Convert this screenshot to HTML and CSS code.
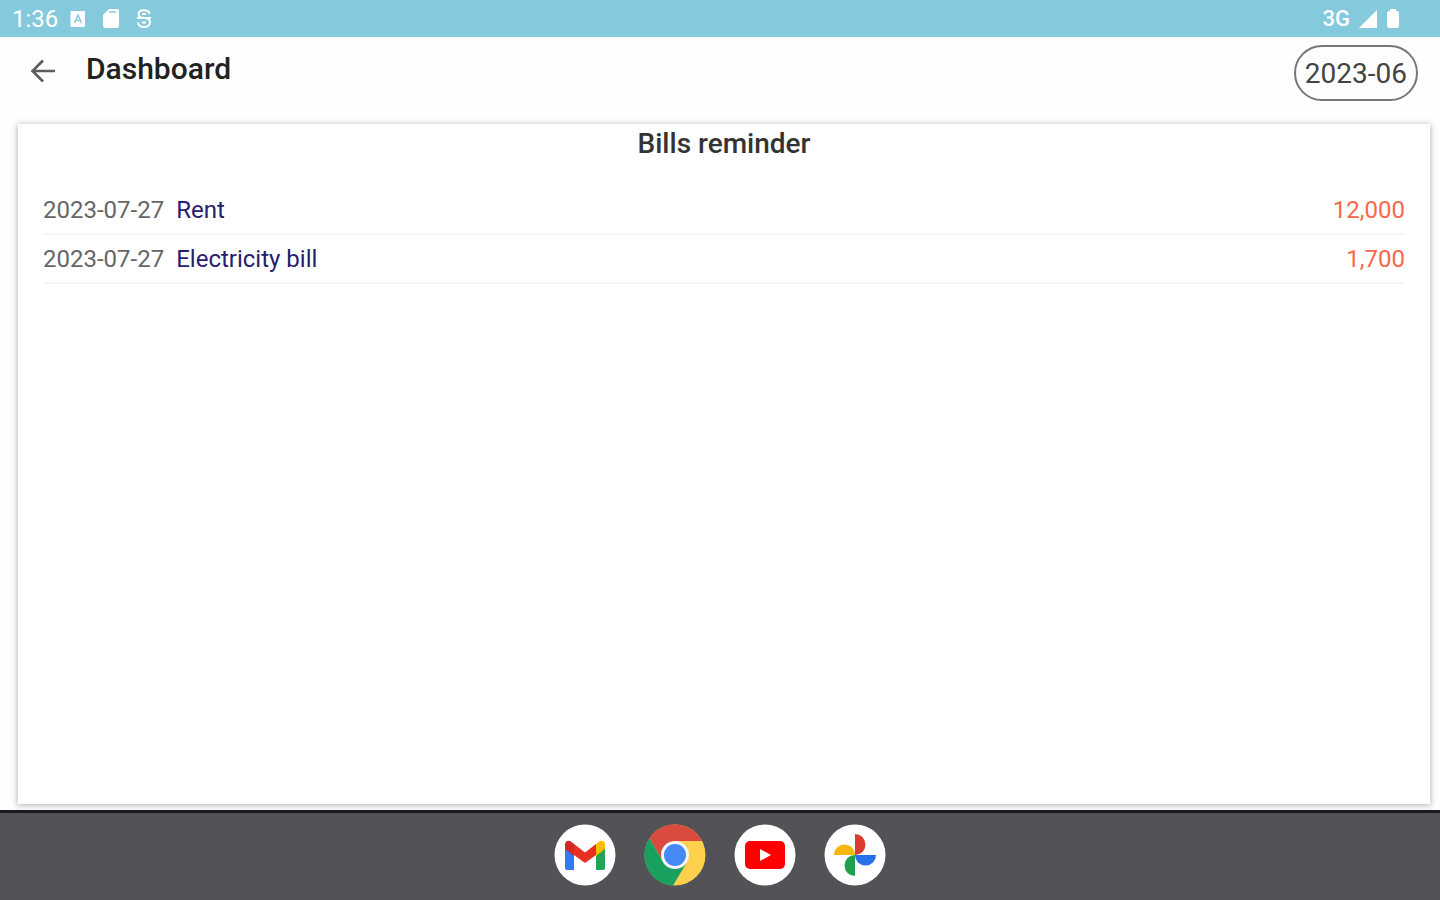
FILE: index.html
```html
<!DOCTYPE html>
<html lang="en">
<head>
  <meta charset="UTF-8">
  <meta name="viewport" content="width=device-width, initial-scale=1">
  <title>Dashboard</title>
  <link rel="stylesheet" href="styles.css">
</head>
<body>
  <div class="status-bar">
    <div class="status-left">
      <span class="clock">1:36</span>
      <svg class="status-icon" width="16" height="22" viewBox="0 0 16 22">
        <rect x="0.500" y="3" width="14.500" height="16" rx="1" fill="#fff"/>
        <path d="M4.500 15 L8 7 L11.500 15 M6 12.500 H10" fill="none" stroke="#84cadc" stroke-width="1.500"/>
      </svg>
      <svg class="status-icon" width="18" height="22" viewBox="0 0 18 22">
        <path d="M7 1 H15 a2 2 0 0 1 2 2 V18 a2 2 0 0 1 -2 2 H3 a2 2 0 0 1 -2 -2 V7 Z" fill="#fff"/>
        <path d="M7 4 H14" stroke="#84cadc" stroke-width="1.500"/>
      </svg>
      <svg class="status-icon" width="16" height="22" viewBox="0 0 16 22">
        <path d="M13.500 6 C13 1 2.500 1 2.500 6 C2.500 10 7 10 8 10 C13 10 14 12 14 14.500 C13.500 20.500 2.500 20.500 2 14.500 M1 10 H15 M6 6 H10 M6 14.500 H10" fill="none" stroke="#fff" stroke-width="2"/>
      </svg>
    </div>
    <div class="status-right">
      <span class="network">3G</span>
      <svg width="20" height="20" viewBox="0 0 20 20"><path d="M19 1 V19 H1 Z" fill="#fff"/></svg>
      <svg width="14" height="22" viewBox="0 0 14 22"><path d="M4 1 H10 V3 H11 a2 2 0 0 1 2 2 V18 a2 2 0 0 1 -2 2 H3 a2 2 0 0 1 -2 -2 V5 a2 2 0 0 1 2 -2 H4 Z" fill="#fff"/></svg>
    </div>
  </div>

  <header class="app-bar">
    <button class="back" type="button" aria-label="Back">
      <svg width="26" height="26" viewBox="0 0 26 26">
        <path d="M25 13 H3 M13 2.500 L2.500 13 L13 23.500" fill="none" stroke="#5c5c5c" stroke-width="2.600"/>
      </svg>
    </button>
    <h1>Dashboard</h1>
    <button class="month" type="button">2023-06</button>
  </header>

  <main class="card">
    <h2>Bills reminder</h2>
    <table class="bills">
      <tbody>
        <tr>
          <td class="date">2023-07-27</td>
          <td class="name">Rent</td>
          <td class="amount">12,000</td>
        </tr>
        <tr>
          <td class="date">2023-07-27</td>
          <td class="name">Electricity bill</td>
          <td class="amount">1,700</td>
        </tr>
      </tbody>
    </table>
  </main>

  <nav class="dock">
    <button class="app" type="button" aria-label="Gmail">
      <svg viewBox="0 0 62 62">
        <circle cx="31" cy="31" r="30.500" fill="#fff"/>
        <path d="M11 24 L20 30 V46 H13 a2 2 0 0 1 -2 -2 Z" fill="#2f7cf0"/>
        <path d="M51 24 L42 30 V46 H49 a2 2 0 0 0 2 -2 Z" fill="#23a455"/>
        <path d="M42 20 L45 17.500 C48 15.500 51 17.500 51 20.500 V25 L42 32 Z" fill="#fbbc04"/>
        <path d="M20 20 L31 28.500 L42 20 V31 L31 39 L20 31 Z" fill="#ea2f22"/>
        <path d="M20 20 L17 17.500 C14 15.500 11 17.500 11 20.500 V25 L20 32 Z" fill="#d02824"/>
      </svg>
    </button>
    <button class="app" type="button" aria-label="Chrome">
      <svg viewBox="0 0 62 62">
        <circle cx="31" cy="31" r="30.500" fill="#ffd04b"/>
        <path d="M31 31 V17 H58 A30.500 30.500 0 0 0 5.500 14 L19 38 Z" fill="#db4a3e"/>
        <path d="M5.500 14 A30.500 30.500 0 0 0 29 61.500 L43 38 L31 31 L19 38 Z" fill="#17a05e"/>
        <circle cx="31" cy="31" r="14" fill="#f3f5f8"/>
        <circle cx="31" cy="31" r="11" fill="#4688f4"/>
      </svg>
    </button>
    <button class="app" type="button" aria-label="YouTube">
      <svg viewBox="0 0 62 62">
        <circle cx="31" cy="31" r="30.500" fill="#fff"/>
        <rect x="11" y="17" width="40" height="28" rx="5" fill="#f00"/>
        <path d="M26 25 L37 31 L26 37 Z" fill="#fff"/>
      </svg>
    </button>
    <button class="app" type="button" aria-label="Photos">
      <svg viewBox="0 0 62 62">
        <circle cx="31" cy="31" r="30.500" fill="#fff"/>
        <path d="M31 10 A10.500 10.500 0 0 1 31 31 Z" fill="#dc3b30"/>
        <path d="M52 31 A10.500 10.500 0 0 1 31 31 Z" fill="#2870ea"/>
        <path d="M31 52 A10.500 10.500 0 0 1 31 31 Z" fill="#1fa04c"/>
        <path d="M10 31 A10.500 10.500 0 0 1 31 31 Z" fill="#f6b60b"/>
      </svg>
    </button>
  </nav>
</body>
</html>
```

FILE: styles.css
```css
* {
  box-sizing: border-box;
}
body {
  display: flex;
  flex-direction: column;
  min-height: 100vh;
  margin: 0;
  background-color: #fefefe;
  font-family: Roboto, sans-serif;
}
button {
  padding: 0;
  border: none;
  background: none;
  font-family: inherit;
  cursor: pointer;
}
svg {
  display: block;
}
.status-bar {
  display: flex;
  align-items: center;
  justify-content: space-between;
  height: 37px;
  padding: 0 40px 0 12px;
  background-color: #84cadc;
  color: #fff;
}
.status-left {
  display: flex;
  align-items: center;
}
.status-icon {
  margin-right: 16px;
}
.clock {
  margin-right: 12px;
  font-size: 24px;
}
.status-right {
  display: flex;
  align-items: center;
  gap: 8px;
}
.network {
  font-size: 22px;
  font-weight: 500;
}
.app-bar {
  display: flex;
  align-items: center;
  height: 73px;
  padding: 0 22px 6px 30px;
}
.app-bar h1 {
  flex: 1;
  margin: 0 0 4px 30px;
  color: #222;
  font-size: 30px;
  font-weight: 500;
}
.month {
  height: 56px;
  margin-top: 5px;
  padding: 0 9px;
  border: 2px solid #777;
  border-radius: 28px;
  color: #444;
  font-size: 28px;
}
.card {
  flex: 1;
  margin: 14px 10px 6px 18px;
  padding: 0 25px;
  background-color: #fff;
  box-shadow: 0 1px 6px 1px rgba(0, 0, 0, 0.25);
}
.card h2 {
  margin: 0;
  padding-bottom: 22px;
  color: #333;
  font-size: 28px;
  font-weight: 500;
  line-height: 40px;
  text-align: center;
}
.bills {
  width: 100%;
  border-spacing: 0;
  font-size: 24px;
}
.bills td {
  height: 49px;
  padding: 0;
  border-bottom: 2px solid #f6f6f6;
  white-space: nowrap;
}
.bills .date {
  width: 1px;
  padding-right: 12px;
  color: #666;
}
.bills .name {
  color: #28206e;
}
.bills .amount {
  color: #f9674c;
  text-align: right;
}
.dock {
  display: flex;
  align-items: center;
  justify-content: center;
  gap: 28px;
  height: 90px;
  padding-bottom: 3px;
  border-top: 3px solid #1c1b22;
  background-color: #535257;
}
.app {
  width: 62px;
  height: 62px;
  border-radius: 50%;
}
```
